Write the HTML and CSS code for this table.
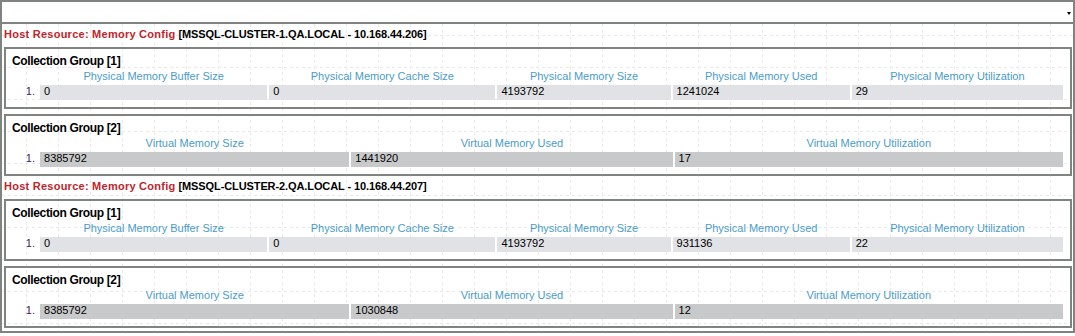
FILE: index.html
```html
<!DOCTYPE html>
<html>
<head>
<meta charset="utf-8">
<link rel="stylesheet" href="styles.css">
</head>
<body>
<div class="frame">
  <div class="picker"><span class="caret"></span></div>
  <div class="content">
    <section class="host">
      <div class="host-title"><span class="res">Host Resource: Memory Config</span> <span class="target">[MSSQL-CLUSTER-1.QA.LOCAL - 10.168.44.206]</span></div>
      <div class="group">
        <div class="group-title">Collection Group [1]</div>
        <table class="data light">
          <tr><th class="num"></th><th class="col-buffer">Physical Memory Buffer Size</th><th class="col-cache">Physical Memory Cache Size</th><th class="col-size">Physical Memory Size</th><th class="col-used">Physical Memory Used</th><th class="col-util">Physical Memory Utilization</th></tr>
          <tr><td class="num">1.</td><td>0</td><td>0</td><td>4193792</td><td>1241024</td><td>29</td></tr>
        </table>
      </div>
      <div class="group">
        <div class="group-title">Collection Group [2]</div>
        <table class="data dark">
          <tr><th class="num"></th><th class="col-vsize">Virtual Memory Size</th><th class="col-vused">Virtual Memory Used</th><th class="col-vutil">Virtual Memory Utilization</th></tr>
          <tr><td class="num">1.</td><td>8385792</td><td>1441920</td><td>17</td></tr>
        </table>
      </div>
    </section>
    <section class="host">
      <div class="host-title"><span class="res">Host Resource: Memory Config</span> <span class="target">[MSSQL-CLUSTER-2.QA.LOCAL - 10.168.44.207]</span></div>
      <div class="group">
        <div class="group-title">Collection Group [1]</div>
        <table class="data light">
          <tr><th class="num"></th><th class="col-buffer">Physical Memory Buffer Size</th><th class="col-cache">Physical Memory Cache Size</th><th class="col-size">Physical Memory Size</th><th class="col-used">Physical Memory Used</th><th class="col-util">Physical Memory Utilization</th></tr>
          <tr><td class="num">1.</td><td>0</td><td>0</td><td>4193792</td><td>931136</td><td>22</td></tr>
        </table>
      </div>
      <div class="group">
        <div class="group-title">Collection Group [2]</div>
        <table class="data dark">
          <tr><th class="num"></th><th class="col-vsize">Virtual Memory Size</th><th class="col-vused">Virtual Memory Used</th><th class="col-vutil">Virtual Memory Utilization</th></tr>
          <tr><td class="num">1.</td><td>8385792</td><td>1030848</td><td>12</td></tr>
        </table>
      </div>
    </section>
  </div>
</div>
</body>
</html>
```

FILE: styles.css
```css
html, body {
  margin: 0;
  padding: 0;
  background: #ffffff;
}
body {
  font-family: "Liberation Sans", Arial, sans-serif;
  font-size: 11px;
  color: #000;
}
.frame {
  box-sizing: border-box;
  width: 1075px;
  height: 333px;
  border: 2px solid #7f8480;
  display: flex;
  flex-direction: column;
  background: #fff;
}
.picker {
  height: 20px;
  border-bottom: 2px solid #7f8480;
  display: flex;
  justify-content: flex-end;
  align-items: flex-start;
}
.caret {
  width: 0;
  height: 0;
  margin-top: 10px;
  margin-right: 2px;
  border-left: 2px solid transparent;
  border-right: 2px solid transparent;
  border-top: 3px solid #000;
}
.content {
  flex: 1;
  padding: 0 1px 0 2px;
  background-color: #fff;
  background-image:
    conic-gradient(at 1px 3px, transparent 270deg, #e9e9e9 270deg),
    conic-gradient(at 3px 1px, transparent 270deg, #e9e9e9 270deg);
  background-size: 32px 6px, 6px 32px;
  background-position: 24px 0, 0 11px;
}
.host-title {
  padding: 2px 0 5px;
  line-height: 16px;
  font-size: 11px;
  font-weight: bold;
  white-space: nowrap;
}
.res {
  color: #c0252b;
  letter-spacing: 0.25px;
}
.target {
  color: #000;
  letter-spacing: -0.1px;
}
.group {
  border: 2px solid #7f8480;
  padding: 0 5px 5px 2px;
}
.group + .group { margin-top: 5px; }
.group-title {
  padding: 5px 0 0 4px;
  line-height: 14px;
  font-size: 12px;
  font-weight: bold;
  letter-spacing: -0.35px;
}
.data {
  width: 100%;
  table-layout: fixed;
  border-collapse: separate;
  border-spacing: 2px;
}
.data th {
  font-weight: normal;
  color: #4a9cc8;
  line-height: 13px;
  padding: 0;
  text-align: center;
  white-space: nowrap;
}
.data td {
  line-height: 13px;
  padding: 0 4px 2px;
  text-align: left;
  white-space: nowrap;
  overflow: hidden;
}
.data .num {
  padding: 0 3px 2px 0;
  text-align: right;
  background: transparent;
  color: #3f2060;
}
.data th.num { padding: 0; width: 28px; }
.col-buffer { width: 227px; }
.col-cache { width: 226px; }
.col-size { width: 173px; }
.col-used { width: 177px; }
.col-util { width: 211px; }
.col-vsize { width: 309px; }
.col-vused { width: 321px; }
.col-vutil { width: 388px; }
.light td:not(.num) { background: #e1e2e5; }
.dark td:not(.num) { background: #c8c9ca; }
```
